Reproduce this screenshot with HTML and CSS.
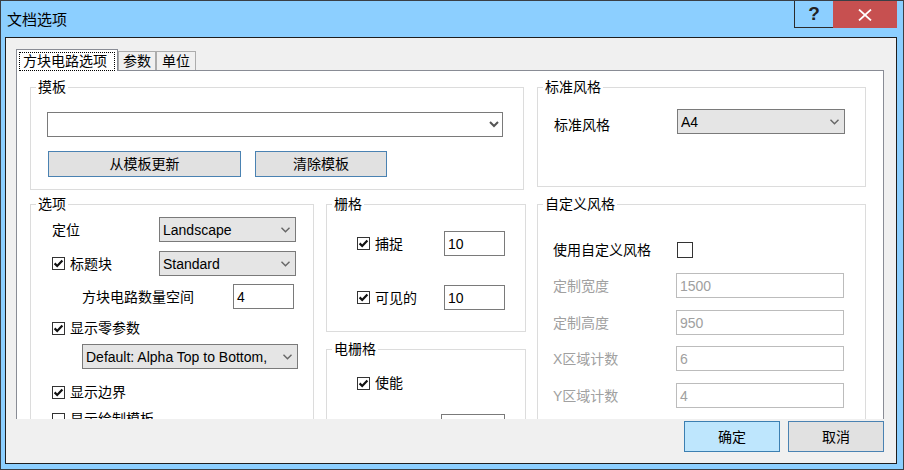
FILE: index.html
```html
<!DOCTYPE html>
<html lang="zh-CN">
<head>
    <meta charset="UTF-8">
    <title>文档选项</title>
    <link rel="stylesheet" href="styles.css">
</head>
<body>
<div class="window">
    <div class="titlebar">
        <span class="title">文档选项</span>
        <div class="caption-buttons">
            <div class="cap-btn cap-help">?</div>
            <div class="cap-btn cap-close">
                <svg width="14" height="12" viewBox="0 0 14 12"><path d="M1 0.5 L13 11.5 M13 0.5 L1 11.5" stroke="#fff" stroke-width="1.7" fill="none"/></svg>
            </div>
        </div>
    </div>

    <div class="client">
        <div class="tabs">
            <div class="tab active"><span class="focus">方块电路选项</span></div>
            <div class="tab">参数</div>
            <div class="tab last">单位</div>
        </div>

        <div class="tab-panel">
            <div class="panel-row">
                <fieldset class="group g-template">
                    <legend>摸板</legend>
                    <div class="body top-body">
                        <div class="combo combo-edit w-template">
                            <span></span>
                            <svg class="chev" width="10" height="7" viewBox="0 0 10 7"><path d="M1 1 L5 5 L9 1" stroke="#555" stroke-width="2" fill="none"/></svg>
                        </div>
                        <div class="btn-row">
                            <button class="btn w-update">从模板更新</button>
                            <button class="btn w-clear">清除模板</button>
                        </div>
                    </div>
                </fieldset>

                <fieldset class="group g-std">
                    <legend>标准风格</legend>
                    <div class="body top-body">
                        <div class="std-row">
                            <span class="std-label">标准风格</span>
                            <div class="combo w-std">
                                <span>A4</span>
                                <svg class="chev" width="9" height="6" viewBox="0 0 9 6"><path d="M0.5 0.8 L4.5 4.8 L8.5 0.8" stroke="#666" stroke-width="1.4" fill="none"/></svg>
                            </div>
                        </div>
                    </div>
                </fieldset>
            </div>

            <div class="panel-row main-row">
                <fieldset class="group g-options">
                    <legend>选项</legend>
                    <div class="body">
                        <div class="opt-row h25 mt5">
                            <span class="opt-label">定位</span>
                            <div class="combo w-opt">
                                <span>Landscape</span>
                                <svg class="chev" width="9" height="6" viewBox="0 0 9 6"><path d="M0.5 0.8 L4.5 4.8 L8.5 0.8" stroke="#666" stroke-width="1.4" fill="none"/></svg>
                            </div>
                        </div>
                        <div class="opt-row h25 mt9">
                            <span class="opt-label">
                                <span class="check"><svg width="11" height="11" viewBox="0 0 11 11"><path d="M1.6 5.4 L4.2 8 L9.4 2.4" stroke="#111" stroke-width="2.2" fill="none"/></svg></span>标题块
                            </span>
                            <div class="combo w-opt">
                                <span>Standard</span>
                                <svg class="chev" width="9" height="6" viewBox="0 0 9 6"><path d="M0.5 0.8 L4.5 4.8 L8.5 0.8" stroke="#666" stroke-width="1.4" fill="none"/></svg>
                            </div>
                        </div>
                        <div class="opt-row h25 mt8 indent">
                            <span class="count-label">方块电路数量空间</span>
                            <div class="field w-count">4</div>
                        </div>
                        <div class="opt-row h24 mt7">
                            <span class="check"><svg width="11" height="11" viewBox="0 0 11 11"><path d="M1.6 5.4 L4.2 8 L9.4 2.4" stroke="#111" stroke-width="2.2" fill="none"/></svg></span>显示零参数
                        </div>
                        <div class="opt-row h25 mt4 indent">
                            <div class="combo w-default">
                                <span>Default: Alpha Top to Bottom,</span>
                                <svg class="chev" width="9" height="6" viewBox="0 0 9 6"><path d="M0.5 0.8 L4.5 4.8 L8.5 0.8" stroke="#666" stroke-width="1.4" fill="none"/></svg>
                            </div>
                        </div>
                        <div class="opt-row h24 mt11">
                            <span class="check"><svg width="11" height="11" viewBox="0 0 11 11"><path d="M1.6 5.4 L4.2 8 L9.4 2.4" stroke="#111" stroke-width="2.2" fill="none"/></svg></span>显示边界
                        </div>
                        <div class="opt-row h24 mt3">
                            <span class="check"></span>显示绘制模板
                        </div>
                    </div>
                </fieldset>

                <div class="col-mid">
                    <fieldset class="group g-grid">
                        <legend>栅格</legend>
                        <div class="body grid-body">
                            <div class="grid-row h25 mt19">
                                <span class="grid-label"><span class="check"><svg width="11" height="11" viewBox="0 0 11 11"><path d="M1.6 5.4 L4.2 8 L9.4 2.4" stroke="#111" stroke-width="2.2" fill="none"/></svg></span>捕捉</span>
                                <div class="field w-grid">10</div>
                            </div>
                            <div class="grid-row h25 mt29">
                                <span class="grid-label"><span class="check"><svg width="11" height="11" viewBox="0 0 11 11"><path d="M1.6 5.4 L4.2 8 L9.4 2.4" stroke="#111" stroke-width="2.2" fill="none"/></svg></span>可见的</span>
                                <div class="field w-grid">10</div>
                            </div>
                        </div>
                    </fieldset>

                    <fieldset class="group g-egrid">
                        <legend>电栅格</legend>
                        <div class="body">
                            <div class="grid-row h24 mt14">
                                <span class="check"><svg width="11" height="11" viewBox="0 0 11 11"><path d="M1.6 5.4 L4.2 8 L9.4 2.4" stroke="#111" stroke-width="2.2" fill="none"/></svg></span>使能
                            </div>
                            <div class="grid-row h25 mt19">
                                <span class="egrid-gap"></span>
                                <div class="field w-egrid"></div>
                            </div>
                        </div>
                    </fieldset>
                </div>

                <fieldset class="group g-custom">
                    <legend>自定义风格</legend>
                    <div class="body custom-body">
                        <div class="cust-row h24 mt26">
                            <span class="cust-label">使用自定义风格</span>
                            <span class="check big"></span>
                        </div>
                        <div class="cust-row h25 mt11">
                            <span class="cust-label disabled">定制宽度</span>
                            <div class="field w-custom off">1500</div>
                        </div>
                        <div class="cust-row h25 mt12">
                            <span class="cust-label disabled">定制高度</span>
                            <div class="field w-custom off">950</div>
                        </div>
                        <div class="cust-row h25 mt11">
                            <span class="cust-label disabled">X区域计数</span>
                            <div class="field w-custom off">6</div>
                        </div>
                        <div class="cust-row h25 mt12">
                            <span class="cust-label disabled">Y区域计数</span>
                            <div class="field w-custom off">4</div>
                        </div>
                    </div>
                </fieldset>
            </div>
        </div>

        <div class="dialog-buttons">
            <button class="btn dlg-btn default">确定</button>
            <button class="btn dlg-btn">取消</button>
        </div>
    </div>
</div>
</body>
</html>
```

FILE: styles.css
```css
* { box-sizing: border-box; }

html, body { margin: 0; padding: 0; }

body {
    font-family: "Liberation Sans", "Noto Sans CJK SC", sans-serif;
    font-size: 14px;
    line-height: 16px;
    color: #000;
    background: #8ccfff;
}

/* window frame */
.window {
    width: 904px;
    height: 470px;
    background: #8ccfff;
    border: 1px solid #3a3f45;
    padding: 0 6px 5px 4px;
    display: flex;
    flex-direction: column;
}

.titlebar {
    height: 36px;
    display: flex;
    align-items: flex-start;
}

.title {
    margin: 8px 0 0 2px;
    font-family: "Noto Sans CJK SC", sans-serif;
    font-size: 15px;
    line-height: 20px;
}

.caption-buttons {
    margin-left: auto;
    display: flex;
}

.cap-btn {
    height: 27px;
    display: flex;
    align-items: center;
    justify-content: center;
}

.cap-help {
    width: 39px;
    border-left: 1px solid #2b2b2b;
    border-bottom: 1px solid #2b2b2b;
    font-weight: bold;
    font-size: 19px;
    color: #222;
}

.cap-close {
    width: 64px;
    background: #c75050;
}

/* client area */
.client {
    flex: 1;
    background: #f0f0f0;
    border: 1px solid #1e1e1e;
    padding: 11px 12px 0 10px;
    display: flex;
    flex-direction: column;
}

.tabs {
    display: flex;
    align-items: flex-end;
    height: 21px;
}

.tab {
    height: 19px;
    padding: 0 4px;
    border: 1px solid #acacac;
    border-bottom: none;
    background: #f0f0f0;
    line-height: 18px;
}

.tab.last { padding: 0 5px; }

.tab.active {
    height: 22px;
    margin-bottom: -1px;
    padding: 2px 2px 0;
    background: #fff;
    border-color: #898c95;
    position: relative;
    z-index: 1;
}

.focus {
    display: block;
    border: 1px dotted #000;
    padding: 0 7px 0 3px;
    line-height: 17px;
}

.tab-panel {
    height: 349px;
    background: #fff;
    border: 1px solid #898c95;
    border-bottom: none;
    overflow: hidden;
    padding: 8px 0 0 13px;
}

.panel-row {
    display: flex;
    align-items: flex-start;
}

.main-row { margin-top: 6px; }

/* group boxes */
.group {
    margin: 0;
    padding: 0;
    border: 1px solid #dcdcdc;
    min-width: 0;
}

.group legend {
    margin-left: 5px;
    padding: 0 2px;
    line-height: 16px;
}

.g-template { width: 494px; }
.g-std { width: 329px; margin-left: 13px; }
.top-body { height: 77px; }

.g-options { width: 284px; }
.g-options .body { padding-bottom: 40px; }

.col-mid {
    width: 200px;
    margin-left: 12px;
    display: flex;
    flex-direction: column;
}

.g-grid { width: 200px; }
.grid-body { height: 100px; }
.g-egrid { width: 200px; margin-top: 9px; }
.g-egrid .body { padding-bottom: 40px; }

.g-custom { width: 329px; margin-left: 11px; }
.custom-body { padding-bottom: 40px; }

/* controls */
.combo {
    height: 25px;
    display: flex;
    align-items: center;
    padding: 0 5px 0 3px;
    border: 1px solid #7a7a7a;
    background: #e5e5e5;
}

.combo span { flex: 1; white-space: nowrap; overflow: hidden; }

.combo-edit { background: #fff; padding-right: 3px; }

.field {
    height: 25px;
    display: flex;
    align-items: center;
    padding: 0 3px;
    border: 1px solid #7a7a7a;
    background: #fff;
}

.field.off {
    color: #a0a0a0;
    border-color: #bcbcbc;
}

.check {
    width: 13px;
    height: 13px;
    margin-right: 5px;
    border: 1px solid #333;
    background: #fff;
    display: inline-flex;
    align-items: center;
    justify-content: center;
    flex-shrink: 0;
}

.check.big {
    width: 16px;
    height: 16px;
    margin: 0 0 0 1px;
}

.btn {
    font: inherit;
    line-height: 16px;
    color: #000;
    background: #e1e1e1;
    border: 1px solid #4a82b2;
    padding: 0;
}

/* template group */
.w-template { width: 456px; margin: 17px 0 0 16px; }

.btn-row {
    display: flex;
    margin: 14px 0 0 17px;
}

.w-update { width: 193px; height: 26px; }
.w-clear { width: 132px; height: 26px; margin-left: 14px; }

/* standard style group */
.std-row {
    display: flex;
    align-items: flex-start;
    margin: 14px 0 0 16px;
}

.std-label { width: 123px; margin-top: 8px; }
.w-std { width: 168px; }

/* options group */
.opt-row {
    display: flex;
    align-items: center;
    padding-left: 21px;
}

.opt-row.indent { padding-left: 51px; }

.opt-label {
    width: 107px;
    display: flex;
    align-items: center;
}

.count-label { width: 151px; }

.w-opt { width: 137px; }
.w-count { width: 61px; }
.w-default { width: 216px; }

/* grid groups */
.grid-row {
    display: flex;
    align-items: center;
    padding-left: 30px;
}

.grid-label {
    width: 87px;
    display: flex;
    align-items: center;
}

.egrid-gap { width: 84px; }
.w-grid { width: 61px; }
.w-egrid { width: 64px; }

/* custom style group */
.cust-row {
    display: flex;
    align-items: center;
    padding-left: 15px;
}

.cust-label { width: 123px; }
.cust-label.disabled { color: #a0a0a0; }
.w-custom { width: 168px; }

.h24 { height: 24px; }
.h25 { height: 25px; }
.mt3 { margin-top: 3px; }
.mt4 { margin-top: 4px; }
.mt5 { margin-top: 5px; }
.mt7 { margin-top: 7px; }
.mt8 { margin-top: 8px; }
.mt9 { margin-top: 9px; }
.mt11 { margin-top: 11px; }
.mt12 { margin-top: 12px; }
.mt14 { margin-top: 14px; }
.mt19 { margin-top: 19px; }
.mt26 { margin-top: 26px; }
.mt29 { margin-top: 29px; }

/* dialog buttons */
.dialog-buttons {
    display: flex;
    justify-content: flex-end;
    margin-top: 2px;
}

.dlg-btn {
    width: 96px;
    height: 31px;
    margin-left: 8px;
}

.dlg-btn.default { background: #bee6fd; border-color: #3c7fb1; }
```
